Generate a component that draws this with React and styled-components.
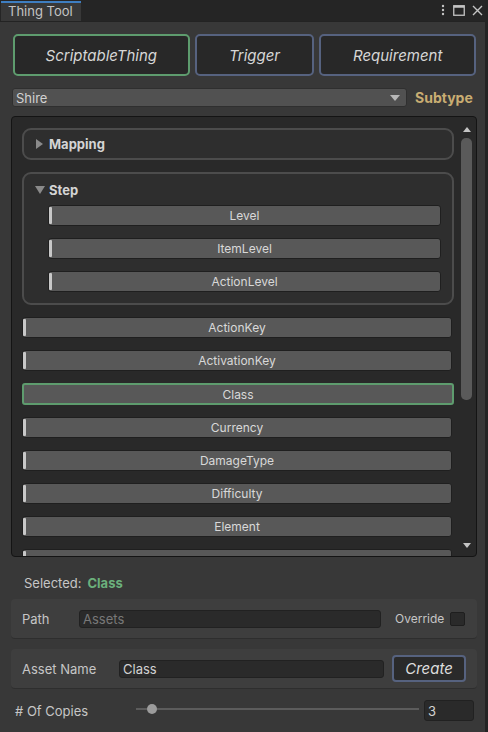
import React from "react"
import styled, { createGlobalStyle } from "styled-components"

const Global = createGlobalStyle`
  html, body { margin: 0; padding: 0; background: #1c1c1c; }
  body { font-family: Inter, "Noto Sans", sans-serif; }
  * { box-sizing: border-box; }
`

const Window = styled.div`
  width: 488px;
  height: 732px;
  display: flex;
  flex-direction: column;
  background: #383838;
  border-right: 3px solid #242424;
  overflow: hidden;
`

const TabBar = styled.div`
  height: 22px;
  display: flex;
  align-items: flex-end;
  background: #252525;
  border-bottom: 1px solid #232323;
`

const Tab = styled.div`
  width: 80px;
  height: 20px;
  margin-left: 1px;
  background: #383838;
  border-top: 2px solid #3e7ec1;
  color: #c4c4c4;
  font-size: 13px;
  padding-left: 7px;
  line-height: 17px;
`

const TabIcons = styled.div`
  margin-left: auto;
  display: flex;
  align-items: center;
  gap: 7px;
  height: 22px;
  padding-right: 2px;
`

const Content = styled.div`
  flex: 1;
  display: flex;
  flex-direction: column;
  padding: 12px 9px 0 11px;
`

const TypeRow = styled.div`
  display: flex;
  gap: 5px;
  padding-left: 2px;
`

const TypeButton = styled.div`
  height: 42px;
  width: ${p => p.$w}px;
  border: 2px solid ${p => (p.$active ? "#5e9c6e" : "#56627f")};
  border-radius: 5px;
  background: #282828;
  color: #d6d6d6;
  font-style: italic;
  font-size: 15px;
  display: flex;
  align-items: center;
  justify-content: center;
`

const SubRow = styled.div`
  display: flex;
  align-items: center;
  margin-top: 12px;
  gap: 8px;
  padding-left: 1px;
`

const Dropdown = styled.div`
  width: 395px;
  height: 19px;
  background: #515151;
  border-radius: 3px;
  border: 1px solid #2f2f2f;
  color: #d2d2d2;
  font-size: 13px;
  padding-left: 3px;
  display: flex;
  align-items: center;
  justify-content: space-between;
  padding-right: 6px;
`

const Caret = styled.span`
  width: 0;
  height: 0;
  border-left: 5px solid transparent;
  border-right: 5px solid transparent;
  border-top: 6px solid #b8b8b8;
`

const Subtype = styled.span`
  color: #c9ad72;
  font-size: 14px;
  font-weight: 700;
`

const ListBox = styled.div`
  margin-top: 9px;
  height: 441px;
  width: 466px;
  background: #292929;
  border: 1px solid #141414;
  border-radius: 4px;
  display: flex;
  overflow: hidden;
`

const ListInner = styled.div`
  flex: 1;
  padding: 11px 0 0 10px;
  display: flex;
  flex-direction: column;
  gap: 12px;
  overflow: hidden;
`

const Foldout = styled.div`
  width: 432px;
  border: 2px solid #4c4c4c;
  border-radius: 9px;
  background: #2e2e2e;
  flex-shrink: 0;
  padding-bottom: ${p => (p.$open ? "11px" : "0")};
`

const FoldHeader = styled.div`
  height: ${p => (p.$open ? "31px" : "28px")};
  display: flex;
  align-items: center;
  gap: 4px;
  padding-left: 11px;
  color: #d4d4d4;
  font-size: 13px;
  font-weight: 700;
`

const Arrow = styled.span`
  width: 0;
  height: 0;
  ${p =>
    p.$open
      ? `border-left: 5px solid transparent; border-right: 5px solid transparent; border-top: 8px solid #8a8a8a;`
      : `border-top: 5px solid transparent; border-bottom: 5px solid transparent; border-left: 7px solid #8a8a8a; margin-left: 1px; margin-right: 2px;`}
`

const FoldItems = styled.div`
  display: flex;
  flex-direction: column;
  gap: 12px;
  padding: 0 11px 0 24px;
`

const Item = styled.div`
  position: relative;
  flex-shrink: 0;
  height: ${p => (p.$selected ? "22px" : "21px")};
  width: ${p => (p.$w ? p.$w + "px" : "auto")};
  background: #585858;
  border: ${p => (p.$selected ? "2px solid #5e9c6e" : "1px solid #1f1f1f")};
  border-radius: 3px;
  color: #d8d8d8;
  font-size: 12px;
  display: flex;
  align-items: center;
  justify-content: center;
  &::before {
    content: "";
    display: ${p => (p.$selected ? "none" : "block")};
    position: absolute;
    left: 0;
    top: 1px;
    bottom: 1px;
    width: 3px;
    border-radius: 1px;
    background: #c8c8c8;
  }
`

const ScrollCol = styled.div`
  width: 19px;
  display: flex;
  flex-direction: column;
  align-items: center;
  padding: 10px 0 8px;
`

const ScrollThumb = styled.div`
  width: 11px;
  height: 262px;
  margin-top: 6px;
  background: #5a5a5a;
  border-radius: 5px;
`

const UpArrow = styled.span`
  width: 0;
  height: 0;
  border-left: 4px solid transparent;
  border-right: 4px solid transparent;
  border-bottom: 5px solid #c4c4c4;
`

const DownArrow = styled.span`
  width: 0;
  height: 0;
  margin-top: auto;
  border-left: 4px solid transparent;
  border-right: 4px solid transparent;
  border-top: 5px solid #c4c4c4;
`

const Selected = styled.div`
  margin-top: 18px;
  padding-left: 13px;
  font-size: 13px;
  color: #c6c6c6;
  display: flex;
  gap: 6px;
  b { color: #6bb07c; font-weight: 700; }
`

const FieldBox = styled.div`
  margin-top: ${p => p.$mt}px;
  width: 466px;
  height: 40px;
  background: #3e3e3e;
  border-radius: 4px;
  border-bottom: 1px solid #2e2e2e;
  display: flex;
  align-items: center;
  padding: 0 11px;
  font-size: 13px;
  color: #c6c6c6;
`

const Label = styled.span`
  width: ${p => p.$w}px;
  margin-left: ${p => p.$ml || 0}px;
  font-size: ${p => p.$fs || 13}px;
  flex-shrink: 0;
  white-space: nowrap;
`

const Input = styled.div`
  width: ${p => p.$w}px;
  flex-shrink: 0;
  height: ${p => p.$h || 18}px;
  margin-left: ${p => p.$ml || 0}px;
  background: #2a2a2a;
  border: 1px solid #212121;
  border-radius: 3px;
  color: ${p => (p.$placeholder ? "#787878" : "#d2d2d2")};
  font-size: 13px;
  padding-left: 3px;
  display: flex;
  align-items: center;
`

const Check = styled.div`
  width: 15px;
  height: 14px;
  flex-shrink: 0;
  background: #2a2a2a;
  border: 1px solid #1e1e1e;
  border-radius: 2px;
  margin-left: 4px;
`

const CreateButton = styled.div`
  margin-left: 8px;
  width: 76px;
  height: 27px;
  border: 2px solid #56627f;
  border-radius: 4px;
  background: #2a2a2a;
  color: #dedede;
  font-style: italic;
  font-size: 15px;
  display: flex;
  align-items: center;
  justify-content: center;
`

const CopiesRow = styled.div`
  margin-top: 11px;
  display: flex;
  align-items: center;
  padding-left: 4px;
  font-size: 13px;
  color: #c6c6c6;
`

const Slider = styled.div`
  position: relative;
  width: 283px;
  height: 2px;
  background: #5c5c5c;
  margin-left: 32px;
  margin-top: -4px;
`

const Thumb = styled.span`
  position: absolute;
  left: 11px;
  top: -4px;
  width: 10px;
  height: 10px;
  border-radius: 50%;
  background: #9c9c9c;
`

const Icon = styled.svg`
  display: block;
`

const inner = ["Level", "ItemLevel", "ActionLevel"]
const outer = ["ActionKey", "ActivationKey", "Class", "Currency", "DamageType", "Difficulty", "Element"]

export default function App() {
  return (
    <Window>
      <Global />
      <TabBar>
        <Tab>Thing Tool</Tab>
        <TabIcons>
          <Icon width="6" height="12" viewBox="0 0 6 12">
            <circle cx="3" cy="2" r="1.2" fill="#c4c4c4" />
            <circle cx="3" cy="6" r="1.2" fill="#c4c4c4" />
            <circle cx="3" cy="10" r="1.2" fill="#c4c4c4" />
          </Icon>
          <Icon width="12" height="11" viewBox="0 0 12 11">
            <rect x="0.75" y="0.75" width="10.5" height="9.5" fill="none" stroke="#c4c4c4" strokeWidth="1.3" />
            <rect x="0.75" y="0.75" width="10.5" height="2" fill="#c4c4c4" />
          </Icon>
          <Icon width="11" height="11" viewBox="0 0 11 11">
            <path d="M1 1 L10 10 M10 1 L1 10" stroke="#c4c4c4" strokeWidth="1.4" />
          </Icon>
        </TabIcons>
      </TabBar>
      <Content>
        <TypeRow>
          <TypeButton $w={177} $active>ScriptableThing</TypeButton>
          <TypeButton $w={120}>Trigger</TypeButton>
          <TypeButton $w={157}>Requirement</TypeButton>
        </TypeRow>
        <SubRow>
          <Dropdown>
            <span>Shire</span>
            <Caret />
          </Dropdown>
          <Subtype>Subtype</Subtype>
        </SubRow>
        <ListBox>
          <ListInner>
            <Foldout>
              <FoldHeader>
                <Arrow />
                Mapping
              </FoldHeader>
            </Foldout>
            <Foldout $open>
              <FoldHeader $open>
                <Arrow $open />
                Step
              </FoldHeader>
              <FoldItems>
                {inner.map(n => (
                  <Item key={n}>{n}</Item>
                ))}
              </FoldItems>
            </Foldout>
            {outer.map(n => (
              <Item key={n} $w={n === "Class" ? 432 : 430} $selected={n === "Class"}>
                {n}
              </Item>
            ))}
            <Item $w={430} />
          </ListInner>
          <ScrollCol>
            <UpArrow />
            <ScrollThumb />
            <DownArrow />
          </ScrollCol>
        </ListBox>
        <Selected>
          Selected: <b>Class</b>
        </Selected>
        <FieldBox $mt={8}>
          <Label $w={57}>Path</Label>
          <Input $w={302} $placeholder>Assets</Input>
          <Label $w={51} $ml={14} $fs={12}>Override</Label>
          <Check />
        </FieldBox>
        <FieldBox $mt={10}>
          <Label $w={97}>Asset Name</Label>
          <Input $w={265}>Class</Input>
          <CreateButton>Create</CreateButton>
        </FieldBox>
        <CopiesRow>
          <Label $w={89}># Of Copies</Label>
          <Slider>
            <Thumb />
          </Slider>
          <Input $w={50} $h={21} $ml={5}>3</Input>
        </CopiesRow>
      </Content>
    </Window>
  )
}
